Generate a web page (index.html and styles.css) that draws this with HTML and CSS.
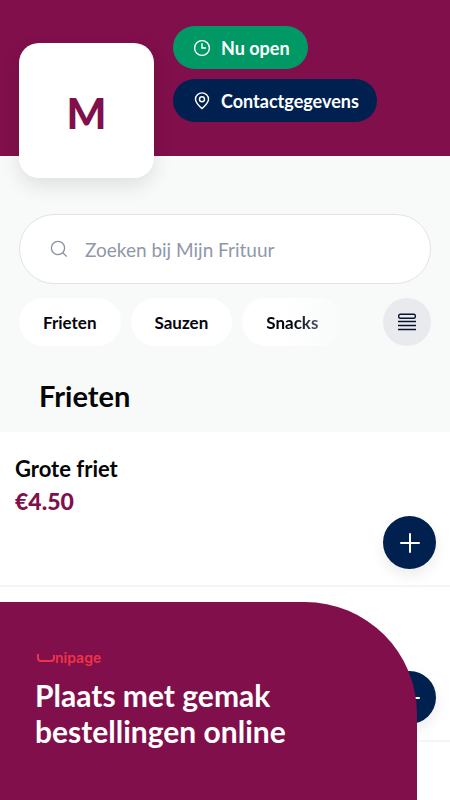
FILE: index.html
```
<!DOCTYPE html>
<html lang="nl">
<head>
<meta charset="utf-8">
<meta name="viewport" content="width=device-width, initial-scale=1">
<title>Mijn Frituur</title>
<link rel="stylesheet" href="styles.css">
</head>
<body>
<header class="hero">
  <div class="logo">M</div>
  <div class="actions">
    <button class="pill pill-open" type="button">
      <svg class="pill-icon" viewBox="0 0 18 18" aria-hidden="true"><circle cx="9" cy="9" r="7.4"/><path d="M9 4.2V9h4"/></svg>
      Nu open
    </button>
    <button class="pill pill-contact" type="button">
      <svg class="pill-icon" viewBox="0 0 18 18" aria-hidden="true"><path d="M9 16.6C6.800 14.300 2.500 11.200 2.500 7.200a6.500 6.300 0 0 1 13 0c0 4-4.300 7.100-6.500 9.400z"/><circle cx="9" cy="7.200" r="2.500"/></svg>
      Contactgegevens
    </button>
  </div>
</header>
<main>
  <section class="finder">
    <label class="search">
      <svg class="search-icon" viewBox="0 0 18 18" aria-hidden="true"><circle cx="8" cy="8" r="6.600"/><path d="M12.700 12.700l4 3.800"/></svg>
      <input class="search-input" type="search" placeholder="Zoeken bij Mijn Frituur" aria-label="Zoeken bij Mijn Frituur">
    </label>
    <nav class="categories" aria-label="Categorieën">
      <div class="chips">
        <a class="chip" href="#frieten">Frieten</a>
        <a class="chip" href="#sauzen">Sauzen</a>
        <a class="chip" href="#snacks"><span class="fade">Snacks</span></a>
      </div>
      <button class="list-button" type="button" aria-label="Alle categorieën">
        <svg class="list-icon" viewBox="0 0 20 18" aria-hidden="true"><rect x="1.700" y="1.200" width="16.600" height="4" rx="1.500"/><path d="M1 8.500h18M1 12.500h18M1 16.500h18"/></svg>
      </button>
    </nav>
    <h1 class="section-title" id="frieten">Frieten</h1>
  </section>
  <ul class="products">
    <li class="product">
      <div>
        <h2 class="product-name">Grote friet</h2>
        <p class="product-price">€4.50</p>
      </div>
      <button class="add" type="button" aria-label="Grote friet toevoegen"><svg class="add-icon" viewBox="0 0 22 22" aria-hidden="true"><path d="M11 2v18M2 11h18"/></svg></button>
    </li>
    <li class="product">
      <button class="add" type="button" aria-label="Toevoegen"><svg class="add-icon" viewBox="0 0 22 22" aria-hidden="true"><path d="M11 2v18M2 11h18"/></svg></button>
    </li>
  </ul>
</main>
<aside class="promo">
  <div class="brand">
    <svg class="brand-mark" viewBox="0 0 18 10" aria-hidden="true"><path d="M1 1v4a3 3 0 0 0 3 3h10a3 3 0 0 0 3-3V2"/></svg><span>nipage</span>
  </div>
  <p class="promo-text">Plaats met gemak<br>bestellingen online</p>
</aside>
</body>
</html>
```
FILE: styles.css
```
:root {
  --plum: #800f4b;
  --navy: #00214f;
  --green: #009966;
  --mist: #f8faf9;
}

* { box-sizing: border-box; }

body {
  margin: 0;
  min-height: 100vh;
  background: #fff;
  color: #050505;
  font-family: Lato, "Liberation Sans", sans-serif;
}

button, input { font: inherit; }
button { border: 0; padding: 0; cursor: pointer; }
h1, h2, p, ul { margin: 0; padding: 0; }
svg { fill: none; stroke: currentColor; flex: none; }

.hero {
  display: flex;
  align-items: flex-start;
  gap: 19px;
  padding: 26px 19px 0;
  background: var(--plum);
}

.logo {
  display: grid;
  place-items: center;
  width: 135px;
  height: 135px;
  margin: 17px 0 -22px;
  padding-top: 4px;
  border-radius: 20px;
  background: #fff;
  box-shadow: 0 8px 20px rgba(0, 0, 0, 0.1);
  color: var(--plum);
  font-size: 42px;
  font-weight: 900;
  position: relative;
}

.actions {
  display: flex;
  flex-direction: column;
  align-items: flex-start;
  gap: 10px;
}

.pill {
  display: flex;
  align-items: center;
  gap: 10px;
  height: 43px;
  padding: 0 18px 0 20px;
  border-radius: 22px;
  color: #fff;
  font-size: 18px;
  font-weight: 700;
  white-space: nowrap;
}
.pill-open { background: var(--green); }
.pill-contact { background: var(--navy); }
.pill-icon { width: 18px; height: 18px; stroke-width: 1.4; }

.finder {
  padding: 58px 19px 18px;
  background: var(--mist);
}

.search {
  display: flex;
  align-items: center;
  gap: 17px;
  height: 70px;
  padding: 0 30px;
  border: 1px solid #e2e3e9;
  border-radius: 35px;
  background: #fff;
  color: #8791a5;
}
.search-icon { width: 18px; height: 18px; stroke-width: 1.3; }
.search-input {
  flex: 1;
  min-width: 0;
  padding: 0;
  border: 0;
  outline: 0;
  background: none;
  color: #050505;
  font-size: 19px;
}
.search-input::placeholder { color: #8e98aa; opacity: 1; }

.categories {
  display: flex;
  justify-content: space-between;
  margin-top: 14px;
}
.chips { display: flex; gap: 10px; }
.chip {
  display: flex;
  align-items: center;
  height: 48px;
  padding: 0 24px;
  border-radius: 24px;
  background: #fff;
  color: #050510;
  font-size: 17px;
  font-weight: 700;
  text-decoration: none;
}
.chip:last-child {
  background: linear-gradient(90deg, #fff 40%, #f9fbfa);
}
.fade {
  background: linear-gradient(90deg, #050510 55%, #4a5370);
  background-clip: text;
  color: transparent;
}
.list-button {
  display: grid;
  place-items: center;
  width: 48px;
  height: 48px;
  border-radius: 50%;
  background: #e9eaee;
  color: #071431;
}
.list-icon { width: 20px; height: 18px; stroke-width: 1.4; }

.section-title {
  padding: 32px 20px 0;
  font-size: 29px;
  line-height: 36px;
  font-weight: 700;
}

.products { list-style: none; }
.product {
  display: flex;
  justify-content: space-between;
  height: 155px;
  padding: 23px 14px 16px 15px;
  border-bottom: 2px solid #f5f5f5;
}
.product-name { font-size: 22px; line-height: 28px; }
.product-price {
  margin-top: 4px;
  color: var(--plum);
  font-size: 23px;
  line-height: 28px;
  font-weight: 900;
}
.add {
  display: grid;
  place-items: center;
  width: 53px;
  height: 53px;
  margin-left: auto;
  align-self: flex-end;
  border-radius: 50%;
  background: var(--navy);
  box-shadow: 0 6px 14px rgba(0, 0, 0, 0.08);
  color: #fff;
}
.add-icon { width: 22px; height: 22px; stroke-width: 2; stroke-linecap: round; }

.promo {
  position: fixed;
  left: 0;
  right: 33px;
  bottom: 0;
  padding: 47px 35px 51px;
  border-top-right-radius: 112px;
  background: var(--plum);
  color: #fff;
}
.brand {
  display: flex;
  align-items: center;
  color: #ee3347;
  font-family: Inter, sans-serif;
  font-size: 14px;
  line-height: 18px;
  font-weight: 600;
  padding-left: 2px;
}
.brand-mark { width: 18px; height: 10px; stroke-width: 2; }
.promo-text {
  margin-top: 10px;
  font-size: 30px;
  line-height: 36px;
  font-weight: 700;
}
```
